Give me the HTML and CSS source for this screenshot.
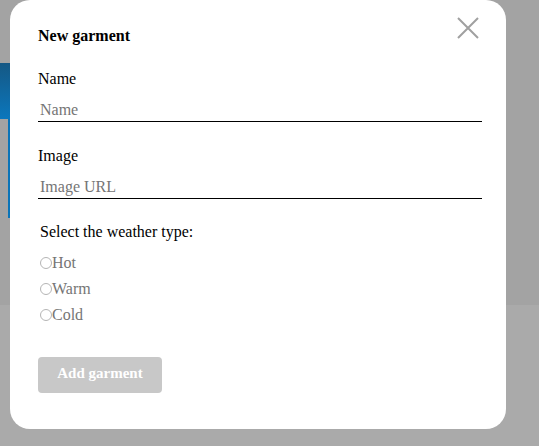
FILE: index.html
```html
<!DOCTYPE html>
<html lang="en">
<head>
<meta charset="utf-8">
<title>New garment</title>
<link rel="stylesheet" href="styles.css">
</head>
<body>
<div class="page">
  <div class="page-top">
    <div class="hero"></div>
    <div class="card-edge"></div>
  </div>
</div>

<div class="modal">
  <button class="close" type="button" aria-label="Close">
    <svg width="22" height="22" viewBox="0 0 22 22" aria-hidden="true">
      <path d="M1 1 L21 21 M21 1 L1 21" stroke="#a0a0a0" stroke-width="2" fill="none"/>
    </svg>
  </button>
  <form class="form">
    <div class="title">New garment</div>

    <label class="label" for="name">Name</label>
    <input class="input" id="name" type="text" placeholder="Name">

    <label class="label label-image" for="image">Image</label>
    <input class="input" id="image" type="text" placeholder="Image URL">

    <div class="weather">
      <div class="weather-title">Select the weather type:</div>
      <div class="radios">
        <label class="radio"><input type="radio" name="weather" class="radio-input"><span>Hot</span></label>
        <label class="radio"><input type="radio" name="weather" class="radio-input"><span>Warm</span></label>
        <label class="radio"><input type="radio" name="weather" class="radio-input"><span>Cold</span></label>
      </div>
    </div>

    <button class="submit" type="button">Add garment</button>
  </form>
</div>
</body>
</html>
```

FILE: styles.css
```css
html, body {
  margin: 0;
  padding: 0;
}

body {
  width: 539px;
  height: 446px;
  overflow: hidden;
  background: #aaaaaa;
  font-family: "Liberation Serif", "Times New Roman", serif;
  position: relative;
}

.page-top {
  height: 305px;
  background: #a3a3a3;
  display: flex;
  flex-direction: column;
}

.hero {
  margin-top: 63px;
  width: 10px;
  height: 56px;
  background: linear-gradient(#155884, #0b77bd);
}

.card-edge {
  margin-left: 8px;
  width: 2px;
  height: 99px;
  background: #0a74b8;
}

.modal {
  position: absolute;
  left: 10px;
  top: 0;
  width: 496px;
  height: 429px;
  box-sizing: border-box;
  background: #ffffff;
  border-radius: 20px;
  padding: 27px 24px 0 28px;
}

.close {
  position: absolute;
  top: 17px;
  left: 447px;
  width: 22px;
  height: 22px;
  padding: 0;
  margin: 0;
  border: none;
  background: none;
  display: block;
}

.close svg {
  display: block;
}

.form {
  display: flex;
  flex-direction: column;
  margin: 0;
}

.title {
  font-size: 16px;
  font-weight: bold;
  line-height: 18px;
  color: #000;
}

.label {
  font-size: 16px;
  line-height: 18px;
  color: #000;
  margin-top: 25px;
}

.label-image {
  margin-top: 25px;
}

.input {
  margin-top: 8px;
  width: 444px;
  box-sizing: border-box;
  border: none;
  border-bottom: 1px solid #000;
  outline: none;
  padding: 5px 2px 2px 2px;
  font-family: "Liberation Serif", "Times New Roman", serif;
  font-size: 16px;
  line-height: 18px;
  height: 26px;
  color: #000;
  background: transparent;
}

.input::placeholder {
  color: #757575;
}

.weather {
  margin-top: 24px;
  padding-left: 2px;
  display: flex;
  flex-direction: column;
}

.weather-title {
  font-size: 16px;
  line-height: 18px;
  color: #000;
}

.radios {
  margin-top: 13px;
  display: flex;
  flex-direction: column;
  gap: 8px;
}

.radio {
  display: flex;
  align-items: flex-start;
  font-size: 16px;
  line-height: 18px;
  color: #757575;
}

.radio-input {
  appearance: none;
  -webkit-appearance: none;
  margin: 3px 0 0 0;
  width: 12px;
  height: 12px;
  box-sizing: border-box;
  border: 1px solid #b5b5b5;
  border-radius: 50%;
  background: #fff;
}

.submit {
  margin-top: 33px;
  align-self: flex-start;
  width: 124px;
  height: 36px;
  box-sizing: border-box;
  padding: 7px 0 11px 0;
  border: none;
  border-radius: 4px;
  background: #c8c8c8;
  color: #ffffff;
  font-family: "Liberation Serif", "Times New Roman", serif;
  font-size: 15px;
  font-weight: bold;
  line-height: 18px;
  text-align: center;
}
```
